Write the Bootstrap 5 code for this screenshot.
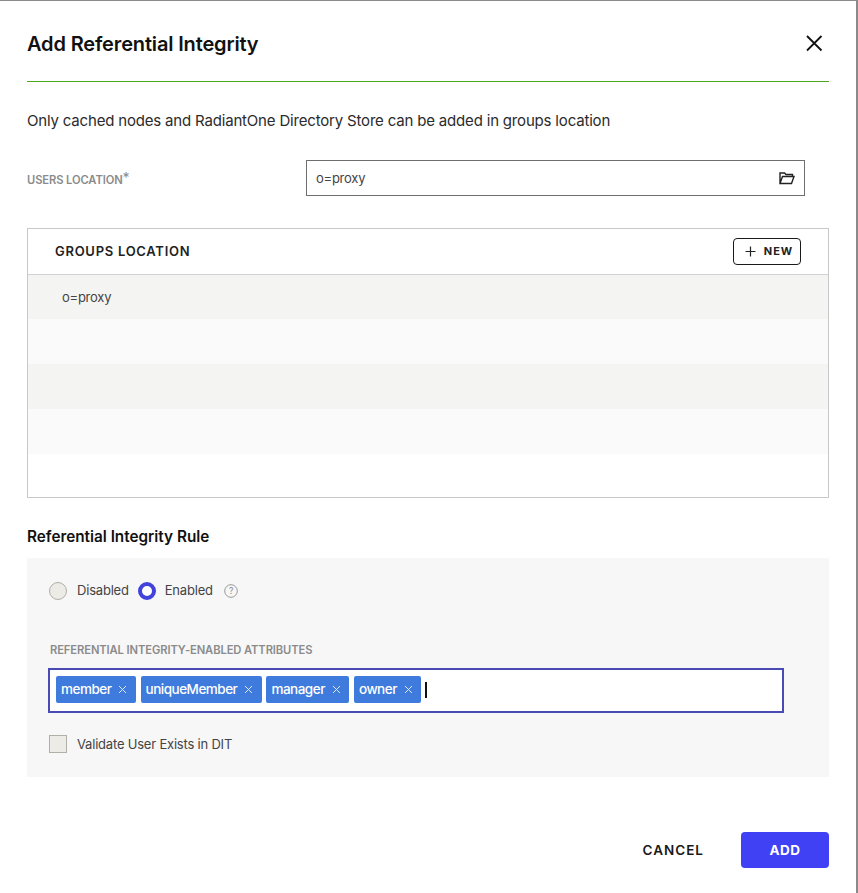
<!doctype html>
<html lang="en">

<head>
    <meta charset="utf-8">
    <meta name="viewport" content="width=device-width, initial-scale=1">
    <title>Add Referential Integrity</title>
    <link href="https://cdn.jsdelivr.net/npm/bootstrap@5.3.1/dist/css/bootstrap.min.css" rel="stylesheet">
    <script src="https://cdn.jsdelivr.net/npm/bootstrap@5.3.1/dist/js/bootstrap.bundle.min.js"></script>
    <style>
        html, body { height: 100%; }
        body { font-family: Inter, "Liberation Sans", sans-serif; color: #1a1a1a; background: #fff; overflow: hidden; }
        .dlg { width: 858px; height: 893px; border-top: 1px solid #8a8a8a; border-right: 2px solid #8a8a8a; padding: 0 27px; }
        .dlg-head { height: 81px; padding-top: 5px; border-bottom: 1px solid #49a81c; }
        .dlg-title { font-size: 20px; font-weight: 600; letter-spacing: -.15px; margin: 0; color: #111; }
        .x-btn { width: 18px; height: 18px; margin: -2px 6px 0 0; line-height: 0; }
        .dlg-note { font-size: 15px; letter-spacing: -.18px; line-height: 20px; margin: 29px 0 0; color: #2b2b2b; }
        .loc-row { margin-top: 29px; height: 36px; }
        .cap { font-size: 11.2px; font-weight: 600; color: #8b8b8b; letter-spacing: -.1px; }
        .cap sup { font-size: 14px; top: -.1em; line-height: 0; font-weight: 400; }
        .loc-label { width: 279px; padding-top: 5px; }
        .loc-input { width: 499px; height: 36px; border: 1px solid #6e6e6e; padding: 0 9px; font-size: 13px; letter-spacing: -.25px; color: #444; }
        .loc-input > span { padding-top: 1px; }
        .grp-box { margin-top: 32px; height: 270px; border: 1px solid #c9c9c9; }
        .grp-head { height: 46px; padding: 0 27px; border-bottom: 1px solid #d2d2d2; }
        .grp-title { font-size: 13px; font-weight: 600; letter-spacing: .72px; color: #222; }
        .new-btn { width: 68px; height: 27px; border: 1px solid #1a1a1a; border-radius: 4px; font-size: 11px; font-weight: 700; letter-spacing: 1px; color: #222; background: #fff; padding: 0 0 0 4px; }
        .grp-row { height: 45px; padding-left: 34px; font-size: 13px; letter-spacing: -.25px; color: #444; }
        .grp-row:first-child { height: 44px; padding-top: 1px; }
        .grp-row:nth-child(odd) { background: #f4f4f2; }
        .grp-row:nth-child(even) { background: #fafafa; }
        .grp-row:last-child { background: #fff; height: 42px; }
        .rule-title { font-size: 15.3px; font-weight: 600; color: #111; margin: 29px 0 0; line-height: 20px; }
        .rule-panel { margin-top: 11px; height: 219px; background: #f7f7f8; padding: 23px 22px 0; }
        .opt { font-size: 13px; letter-spacing: -.2px; color: #444; }
        .radio-off { width: 18px; height: 18px; border-radius: 50%; background: #ecebe6; border: 1px solid #b0b0a8; margin-right: 10px; }
        .radio-on { width: 18px; height: 18px; border-radius: 50%; background: #fff; border: 4.500px solid #4242dd; margin: 0 9px; }
        .help-ic { margin-left: 11px; width: 14px; height: 14px; }
        .cap-attr { margin: 42px 0 0 1px; line-height: 14px; }
        .tag-box { margin: 11px 0 0 -1px; width: 736px; height: 45px; background: #fff; border: 2px solid #4a4ab5; padding: 0 6px 1px; gap: 4.600px; }
        .chip { height: 27px; background: #3f7bdc; color: #fff; border-radius: 2px; font-size: 13.500px; font-weight: 500; letter-spacing: -.5px; padding: 0 8.500px 0 5px; gap: 7px; }
        .chip svg { width: 9px; height: 9px; }
        .caret-bar { width: 2px; height: 16px; background: #111; margin-left: -1px; }
        .check-row { margin-top: 22px; }
        .check-off { width: 18px; height: 18px; background: #ecebe6; border: 1px solid #b0b0a8; margin-right: 10px; }
        .dlg-foot { margin-top: 55px; }
        .cancel-btn { font-size: 13.500px; font-weight: 600; letter-spacing: 1px; color: #1a1a1a; margin-right: 37px; padding: 0; border: 0; background: none; }
        .add-btn { width: 88px; height: 36px; background: #4040f5; color: #fff; border: 0; border-radius: 4px; font-size: 13.500px; font-weight: 700; letter-spacing: .5px; padding: 0; }
    </style>
</head>

<body>
    <div class="dlg">
        <div class="dlg-head d-flex align-items-center justify-content-between">
            <h1 class="dlg-title">Add Referential Integrity</h1>
            <span class="x-btn">
                <svg width="18" height="18" viewBox="0 0 18 18"><path d="M2 2L16.500 16.500M16.500 2L2 16.500" stroke="#111" stroke-width="1.800" fill="none"/></svg>
            </span>
        </div>

        <p class="dlg-note">Only cached nodes and RadiantOne Directory Store can be added in groups location</p>

        <div class="loc-row d-flex align-items-center">
            <div class="loc-label cap">USERS LOCATION<sup>*</sup></div>
            <div class="loc-input d-flex align-items-center justify-content-between">
                <span>o=proxy</span>
                <svg width="16" height="14" viewBox="0 0 16 14"><path d="M1 12.500V2h4.500l1.500 1.500h6.500V5.500M1 12.500h11.500L15 5.500H3.500L1 12.500z" stroke="#222" stroke-width="1.400" fill="none"/></svg>
            </div>
        </div>

        <div class="grp-box">
            <div class="grp-head d-flex align-items-center justify-content-between">
                <span class="grp-title">GROUPS LOCATION</span>
                <button class="new-btn d-flex align-items-center justify-content-center gap-2">
                    <svg width="11" height="11" viewBox="0 0 11 11"><path d="M5.500 0.500v10M0.500 5.500h10" stroke="#222" stroke-width="1.200"/></svg>
                    <span>NEW</span>
                </button>
            </div>
            <div>
                <div class="grp-row d-flex align-items-center">o=proxy</div>
                <div class="grp-row"></div>
                <div class="grp-row"></div>
                <div class="grp-row"></div>
                <div class="grp-row"></div>
            </div>
        </div>

        <h2 class="rule-title">Referential Integrity Rule</h2>
        <div class="rule-panel">
            <div class="d-flex align-items-center opt">
                <span class="radio-off"></span>
                <span>Disabled</span>
                <span class="radio-on"></span>
                <span>Enabled</span>
                <svg class="help-ic" viewBox="0 0 14 14"><circle cx="7" cy="7" r="6.300" fill="none" stroke="#999" stroke-width="1"/><text x="7" y="10" font-size="8.500" text-anchor="middle" fill="#888" font-family="Inter, sans-serif">?</text></svg>
            </div>
            <div class="cap cap-attr">REFERENTIAL INTEGRITY-ENABLED ATTRIBUTES</div>
            <div class="tag-box d-flex align-items-center">
                <span class="chip d-inline-flex align-items-center">member <svg viewBox="0 0 9 9"><path d="M1 1l7 7M8 1l-7 7" stroke="#dfe9fb" stroke-width="1"/></svg></span>
                <span class="chip d-inline-flex align-items-center">uniqueMember <svg viewBox="0 0 9 9"><path d="M1 1l7 7M8 1l-7 7" stroke="#dfe9fb" stroke-width="1"/></svg></span>
                <span class="chip d-inline-flex align-items-center">manager <svg viewBox="0 0 9 9"><path d="M1 1l7 7M8 1l-7 7" stroke="#dfe9fb" stroke-width="1"/></svg></span>
                <span class="chip d-inline-flex align-items-center">owner <svg viewBox="0 0 9 9"><path d="M1 1l7 7M8 1l-7 7" stroke="#dfe9fb" stroke-width="1"/></svg></span>
                <span class="caret-bar"></span>
            </div>
            <div class="check-row d-flex align-items-center opt">
                <span class="check-off"></span>
                <span>Validate User Exists in DIT</span>
            </div>
        </div>

        <div class="dlg-foot d-flex align-items-center justify-content-end">
            <button class="cancel-btn">CANCEL</button>
            <button class="add-btn">ADD</button>
        </div>
    </div>
</body>

</html>
